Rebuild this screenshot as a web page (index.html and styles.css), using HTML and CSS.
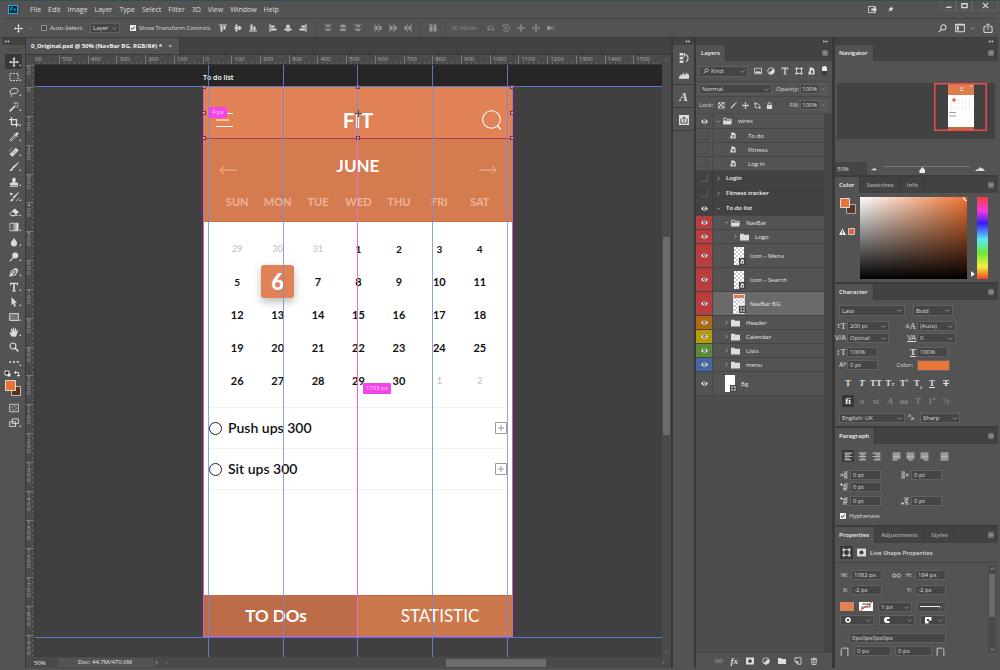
FILE: index.html
```html
<!DOCTYPE html>
<html lang="en">
<head>
<meta charset="utf-8">
<title>0_Original.psd</title>
<link rel="stylesheet" href="styles.css">
</head>
<body>
<svg class="defs" aria-hidden="true">
  <symbol id="move" viewBox="0 0 16 16"><path d="M8 0l2.6 3.4H9v3.600h3.600V5.400L16 8l-3.400 2.600V9H9v3.600h1.600L8 16l-2.600-3.400H7V9H3.400v1.600L0 8l3.400-2.600V7H7V3.400H5.400z" fill="currentColor"/></symbol>
  <symbol id="move3" viewBox="0 0 16 16"><path d="M8 0l3 4H5zM8 16l3-4H5zM0 8l4-3v6zM16 8l-4-3v6zM8 5l3 3-3 3-3-3z" fill="currentColor"/></symbol>
  <symbol id="chev" viewBox="0 0 16 16"><path d="M3 5.500l5 5 5-5" fill="none" stroke="currentColor" stroke-width="1.800"/></symbol>
  <symbol id="chevr" viewBox="0 0 16 16"><path d="M5.500 2l5 6-5 6" fill="none" stroke="currentColor" stroke-width="1.800"/></symbol>
  <symbol id="dbl" viewBox="0 0 16 8"><path d="M7 0v8L1 4zM15 0v8L9 4z" fill="currentColor"/></symbol>
  <symbol id="burger" viewBox="0 0 16 14"><path d="M1 1.500h14M1 5.200h14M1 8.800h14M1 12.500h14" stroke="currentColor" stroke-width="2"/></symbol>
  <symbol id="al-top" viewBox="0 0 16 16"><path d="M0 1h16v2H0zM3 4h4v11H3zM9 4h4v7H9z" fill="currentColor"/></symbol>
  <symbol id="al-mid" viewBox="0 0 16 16"><path d="M0 7h16v2H0zM3 1h4v14H3zM9 4h4v8H9z" fill="currentColor"/></symbol>
  <symbol id="al-bot" viewBox="0 0 16 16"><path d="M0 13h16v2H0zM3 1h4v11H3zM9 5h4v7H9z" fill="currentColor"/></symbol>
  <symbol id="al-left" viewBox="0 0 16 16"><path d="M1 0h2v16H1zM4 3h7v4H4zM4 9h11v4H4z" fill="currentColor"/></symbol>
  <symbol id="al-cen" viewBox="0 0 16 16"><path d="M7 0h2v16H7zM4 3h8v4H4zM1 9h14v4H1z" fill="currentColor"/></symbol>
  <symbol id="al-right" viewBox="0 0 16 16"><path d="M13 0h2v16h-2zM5 3h7v4H5zM1 9h11v4H1z" fill="currentColor"/></symbol>
  <symbol id="di-v" viewBox="0 0 16 16"><path d="M0 1h16v1.500H0zM4 3h8v3H4zM0 9h16v1.500H0zM4 11h8v3H4z" fill="currentColor"/></symbol>
  <symbol id="di-m" viewBox="0 0 16 16"><path d="M0 3.500h16V5H0zM4 1h8v6H4zM0 11h16v1.500H0zM3 9h10v5H3z" fill="currentColor"/></symbol>
  <symbol id="di-h" viewBox="0 0 16 16"><path d="M1 0h1.500v16H1zM3 4h4v8H3zM9 0h1.500v16H9zM11 4h4v8h-4z" fill="currentColor"/></symbol>
  <symbol id="autoal" viewBox="0 0 16 16"><path d="M1 1h6v3H1zM9 1h6v3H9zM1 5h6v10H1zM9 5h6v10H9z" fill="currentColor"/></symbol>
  <symbol id="orbit" viewBox="0 0 16 16"><path d="M2 11C0 7 5 2 9 4s6 7 3 8-9-2-8-5M1 12l5-1M12 9l2 4" fill="none" stroke="currentColor" stroke-width="1.600"/></symbol>
  <symbol id="roll" viewBox="0 0 16 16"><path d="M2.500 4A7 7 0 1 1 2 11M2 1v4h4" fill="none" stroke="currentColor" stroke-width="1.500"/><circle cx="8" cy="8" r="2.300" fill="none" stroke="currentColor" stroke-width="1.400"/></symbol>
  <symbol id="cam" viewBox="0 0 16 16"><path d="M0 4.500h7v7H0zM7 8l3.500-3v6z" fill="currentColor"/><path d="M15 3l-3 5 3 5" fill="none" stroke="currentColor" stroke-width="1.300"/></symbol>
  <symbol id="search" viewBox="0 0 16 16"><circle cx="9.500" cy="6" r="4.500" fill="none" stroke="currentColor" stroke-width="1.800"/><path d="M6.500 9.500L1.500 14.500" stroke="currentColor" stroke-width="2.200"/></symbol>
  <symbol id="wksp" viewBox="0 0 16 16"><path d="M1 2h14v12H1z" fill="none" stroke="currentColor" stroke-width="1.600"/><path d="M3 5h3v7H3zM1 2h14v2H1z" fill="currentColor"/></symbol>
  <symbol id="share" viewBox="0 0 16 16"><path d="M5 6H1.500v9h13V6H11M8 11V1.500M4.500 4.500L8 1l3.500 3.500" fill="none" stroke="currentColor" stroke-width="1.600"/></symbol>
  <symbol id="marq" viewBox="0 0 16 16"><path d="M1.500 2.500h13v11h-13z" fill="none" stroke="currentColor" stroke-width="1.600" stroke-dasharray="3 1.800"/></symbol>
  <symbol id="lasso" viewBox="0 0 16 16"><path d="M4 11C-1 9 2 2 9 2s7 7 1 8.500c-3 .5-6-.5-7 1s2 2 1 4" fill="none" stroke="currentColor" stroke-width="1.600"/></symbol>
  <symbol id="wand" viewBox="0 0 16 16"><path d="M1 15L10 6" stroke="currentColor" stroke-width="2.600"/><path d="M11 0v4M13.500 5.500h3M7 1l2 2M14.500 1L13 3M12 7l2 2.500" stroke="currentColor" stroke-width="1.400"/></symbol>
  <symbol id="crop" viewBox="0 0 16 16"><path d="M4 0v12h12M0 4h12v12" fill="none" stroke="currentColor" stroke-width="2"/></symbol>
  <symbol id="drop" viewBox="0 0 16 16"><path d="M2 14l1-3 6-6 2 2-6 6z" fill="none" stroke="currentColor" stroke-width="1.500"/><path d="M8 3l5 5 1-1-1.500-1.500L15 3a2 2 0 0 0-2.500-2.500L10 3 9 2z" fill="currentColor"/></symbol>
  <symbol id="heal" viewBox="0 0 16 16"><path d="M1 11l10-10 4.500 4.500-10 10z" fill="currentColor"/><path d="M6 6l4.500 4.500M8 4l4 4M4 8l4 4" stroke="#555" stroke-width=".8"/><path d="M1 7c0-3 2-5 5-5" stroke="currentColor" fill="none" stroke-dasharray="2 1"/></symbol>
  <symbol id="brush" viewBox="0 0 16 16"><path d="M15 1L7 10 5.500 8.500z" stroke="currentColor" stroke-width="1.500" fill="currentColor"/><path d="M5 9.500c2 1 2 2.500 0 4-1.500 1-3.500 1-4.500.5 2-1 2-4 4.500-4.500z" fill="currentColor"/></symbol>
  <symbol id="stamp" viewBox="0 0 16 16"><path d="M6.500 8.500C4 4 5 1 8 1s4 3 1.500 7.500l5 1V13h-13V9.500zM1.500 14h13v1.500h-13z" fill="currentColor"/></symbol>
  <symbol id="hist" viewBox="0 0 16 16"><path d="M15 1L8 10 6.500 8.500z" stroke="currentColor" stroke-width="1.400" fill="currentColor"/><path d="M6 10c2 1 1 3-.5 4.500-1 .5-3 .5-4 0 2-1 2-4 4.500-4.500zM1 1l6 1-4 4z" fill="currentColor"/><path d="M11 14c3-1 4-3 4-5" fill="none" stroke="currentColor"/></symbol>
  <symbol id="erase" viewBox="0 0 16 16"><path d="M1 11l8-8 6 5-6 6H4z" fill="none" stroke="currentColor" stroke-width="1.500"/><path d="M5 7l4-4 6 5-4 4zM3 13h12v1.500H3z" fill="currentColor"/></symbol>
  <symbol id="grad" viewBox="0 0 16 16"><linearGradient id="gr"><stop offset="0" stop-color="#333"/><stop offset="1" stop-color="#eee"/></linearGradient><path d="M1.500 2h13v12h-13z" fill="url(#gr)" stroke="currentColor" stroke-width="1.300"/></symbol>
  <symbol id="blur" viewBox="0 0 16 16"><path d="M8 1c2 4 5 6 5 9a5 5 0 0 1-10 0c0-3 3-5 5-9z" fill="currentColor"/></symbol>
  <symbol id="dodge" viewBox="0 0 16 16"><circle cx="10" cy="5.500" r="4.800" fill="currentColor"/><path d="M7 9l-6 6" stroke="currentColor" stroke-width="2"/></symbol>
  <symbol id="pen" viewBox="0 0 16 16"><path d="M1.500 14.500L4 6.500 9.500 3l4 4L10 12.500zM1.500 14.500L8 8M10.500 2l4 4" fill="none" stroke="currentColor" stroke-width="1.700"/><circle cx="8.500" cy="7.500" r="1.500" fill="currentColor"/></symbol>
  <symbol id="type" viewBox="0 0 16 16"><path d="M1.500 1h13v4.500h-1.300C13 3.500 12.500 3 10.500 3H9.300v9.500c0 1 .5 1.200 2 1.300V15H4.700v-1.200c1.500-.1 2-.3 2-1.300V3H5.500C3.500 3 3 3.500 2.800 5.500H1.500z" fill="currentColor"/></symbol>
  <symbol id="arrow" viewBox="0 0 16 16"><path d="M4 0l9 9.500H9l2 5-2.500 1-2-5L4 13z" fill="currentColor"/></symbol>
  <symbol id="rect" viewBox="0 0 16 16"><path d="M1 2.500h14v11H1z" fill="#777" stroke="currentColor" stroke-width="1.500"/></symbol>
  <symbol id="hand" viewBox="0 0 16 16"><path d="M4 15L.5 9l1.500-1L4 10 3 3l1.500-.5L6 7V1h1.700l.6 6L10 1.500l1.500.5-.7 6L13 4.500l1.500.5L12.500 12 11 15.500z" fill="currentColor"/></symbol>
  <symbol id="zoom" viewBox="0 0 16 16"><circle cx="6.300" cy="6.300" r="4.800" fill="none" stroke="currentColor" stroke-width="1.800"/><path d="M10 10l5 5" stroke="currentColor" stroke-width="2.500"/></symbol>
  <symbol id="dots" viewBox="0 0 16 16"><circle cx="2" cy="8" r="1.700" fill="currentColor"/><circle cx="8" cy="8" r="1.700" fill="currentColor"/><circle cx="14" cy="8" r="1.700" fill="currentColor"/></symbol>
  <symbol id="qmask" viewBox="0 0 16 16"><path d="M1 2h14v12H1z" fill="none" stroke="currentColor" stroke-width="1.300"/><circle cx="8" cy="8" r="3.500" fill="none" stroke="currentColor" stroke-width="1.300" stroke-dasharray="1.500 1"/></symbol>
  <symbol id="screen" viewBox="0 0 16 16"><path d="M5 1.500h10v7.500H5zM1 6h9.500v7.500H1z" fill="#535353" stroke="currentColor" stroke-width="1.500"/></symbol>
  <symbol id="eye" viewBox="0 0 16 12"><path d="M0 6c4-6.500 12-6.500 16 0-4 6.500-12 6.500-16 0z" fill="#f4f4f4"/><circle cx="8" cy="6" r="3.500" fill="#444"/><circle cx="8" cy="6" r="1.300" fill="#f4f4f4"/></symbol>
  <symbol id="folder" viewBox="0 0 16 14"><path d="M0 1h6l1.500 2H16v10H0z" fill="currentColor"/></symbol>
  <symbol id="folderopen" viewBox="0 0 16 14"><path d="M1 12V2h5l1 2h7.500v2" fill="none" stroke="currentColor" stroke-width="1.500"/><path d="M2 6h14l-1.500 7H0z" fill="currentColor"/></symbol>
  <symbol id="smart" viewBox="0 0 16 16"><path d="M3 1h6l4 4v10H7v-3h3V7H6v3H3z" fill="currentColor"/><path d="M1 9h5v6H1z" fill="currentColor"/></symbol>
  <symbol id="picture" viewBox="0 0 16 16"><path d="M1 2.500h14v11H1z" fill="none" stroke="currentColor" stroke-width="1.600"/><path d="M3 11l3-4 3 3 2-2 3 3v1H3z" fill="currentColor"/></symbol>
  <symbol id="adj" viewBox="0 0 16 16"><circle cx="8" cy="8" r="6.500" fill="none" stroke="currentColor" stroke-width="1.600"/><path d="M12.600 3.400A6.500 6.500 0 1 1 3.400 12.600z" fill="currentColor"/></symbol>
  <symbol id="shape" viewBox="0 0 16 16"><path d="M3 3h10v10H3z" fill="none" stroke="currentColor" stroke-width="1.600"/><path d="M1 1h4v4H1zM11 1h4v4h-4zM1 11h4v4H1zM11 11h4v4h-4z" fill="currentColor"/></symbol>
  <symbol id="lock" viewBox="0 0 16 16"><path d="M2 7h12v9H2z" fill="currentColor"/><path d="M4.500 7V4.500a3.500 3.500 0 0 1 7 0V7" fill="none" stroke="currentColor" stroke-width="2"/></symbol>
  <symbol id="check" viewBox="0 0 16 16"><path d="M1 1h14v14H1z" fill="none" stroke="currentColor"/><path d="M1 1h4v4H1zM9 1h4v4H9zM5 5h4v4H5zM1 9h4v4H1zM9 9h4v4H9z" fill="currentColor"/></symbol>
  <symbol id="artb" viewBox="0 0 16 16"><path d="M3 0v13h13M0 4h9l4 4v8" fill="none" stroke="currentColor" stroke-width="1.700"/></symbol>
  <symbol id="history" viewBox="0 0 16 16"><path d="M1 0h6v4H1zM1 6h6v4H1zM1 12h6v4H1z" fill="currentColor"/><path d="M9 3c5-1 6 4 5 8l-3 3M9 0v6" fill="none" stroke="currentColor" stroke-width="1.700"/></symbol>
  <symbol id="histo" viewBox="0 0 16 16"><path d="M0 14V9l1 2 1-5 1 4 1-3 1 2 1-5 1 3 1-4 1 6 1-3 1 2 1-5 1 4 1-2 1 3 1-2v8z" fill="currentColor"/></symbol>
  <symbol id="upbox" viewBox="0 0 16 16"><path d="M0 0h16v16H0z" fill="currentColor"/><path d="M3 6v7h10V6M8 11V4M5 6l3-3 3 3" fill="none" stroke="#444" stroke-width="1.500"/></symbol>
  <symbol id="link" viewBox="0 0 16 8"><path d="M7 4a3 3 0 1 1-6 0 3 3 0 0 1 6 0zM15 4a3 3 0 1 1-6 0 3 3 0 0 1 6 0z" fill="none" stroke="currentColor" stroke-width="1.500"/></symbol>
  <symbol id="mask" viewBox="0 0 16 16"><path d="M0 1h16v14H0z" fill="currentColor"/><circle cx="8" cy="8" r="3.700" fill="#444"/></symbol>
  <symbol id="newl" viewBox="0 0 16 16"><path d="M2 1.500h12v13H8L2 9z" fill="none" stroke="currentColor" stroke-width="1.700"/><path d="M2 8.500h6.500V15z" fill="currentColor"/></symbol>
  <symbol id="trash" viewBox="0 0 16 16"><path d="M3 5h10l-1 10H4zM2 3.500h12M6 2h4M6.500 7v6M9.500 7v6" fill="none" stroke="currentColor" stroke-width="1.500"/></symbol>
  <symbol id="mount" viewBox="0 0 20 10"><path d="M0 9l4-4 2 1 4-5 3 3 2-1 5 6z" fill="currentColor"/></symbol>
  <symbol id="pl" viewBox="0 0 16 16"><path d="M1 2h14M1 5h9M1 8h14M1 11h9M1 14h12" stroke="currentColor" stroke-width="2"/></symbol>
  <symbol id="pc" viewBox="0 0 16 16"><path d="M1 2h14M4 5h8M1 8h14M4 11h8M2 14h12" stroke="currentColor" stroke-width="2"/></symbol>
  <symbol id="pr" viewBox="0 0 16 16"><path d="M1 2h14M6 5h9M1 8h14M6 11h9M3 14h12" stroke="currentColor" stroke-width="2"/></symbol>
  <symbol id="pj1" viewBox="0 0 16 16"><path d="M1 2h14M1 5h14M1 8h14M1 11h14M1 14h9" stroke="currentColor" stroke-width="2.400"/></symbol>
  <symbol id="pj2" viewBox="0 0 16 16"><path d="M1 2h14M1 5h14M1 8h14M1 11h14M4 14h8" stroke="currentColor" stroke-width="2.400"/></symbol>
  <symbol id="pj3" viewBox="0 0 16 16"><path d="M1 2h14M1 5h14M1 8h14M1 11h14M6 14h9" stroke="currentColor" stroke-width="2.400"/></symbol>
  <symbol id="pj4" viewBox="0 0 16 16"><path d="M1 2h14M1 5h14M1 8h14M1 11h14M1 14h14" stroke="currentColor" stroke-width="2.400"/></symbol>
  <symbol id="indl" viewBox="0 0 16 16"><path d="M0 8h6M4 5l3 3-3 3" stroke="currentColor" fill="none" stroke-width="1.600"/><path d="M8 2h8M8 5h6M8 8h8M8 11h6M8 14h8" stroke="currentColor" stroke-width="1.500"/></symbol>
  <symbol id="indr" viewBox="0 0 16 16"><path d="M16 8h-6M13 5l-3 3 3 3" stroke="currentColor" fill="none" stroke-width="1.600"/><path d="M0 2h8M2 5h6M0 8h8M2 11h6M0 14h8" stroke="currentColor" stroke-width="1.500"/></symbol>
  <symbol id="indt" viewBox="0 0 16 16"><path d="M0 3h6M3 0v6" stroke="currentColor" stroke-width="1.600"/><path d="M8 2h8M6 5h8M6 8h10M6 11h8M6 14h8" stroke="currentColor" stroke-width="1.500"/></symbol>
  <symbol id="indb" viewBox="0 0 16 16"><path d="M0 13h6M3 10v6" stroke="currentColor" stroke-width="1.600"/><path d="M6 2h10M8 5h6M6 8h8M8 11h6M8 14h8" stroke="currentColor" stroke-width="1.500"/></symbol>
  <symbol id="cornl" viewBox="0 0 16 16"><path d="M2 16V6c0-3 1.500-4 4-4h8v14" fill="none" stroke="currentColor" stroke-width="1.500"/></symbol>
</svg>

<div class="app">
  <header class="menubar">
    <svg class="pslogo" viewBox="0 0 22 20"><rect x="1" y="1" width="20" height="18" fill="#0a2433" stroke="#26b9ee" stroke-width="2"/><path d="M6 15V5h3a2.500 2.500 0 0 1 0 5H6M17 8.500c-3-1-4 .5-3 1.500l2 1.500c1 1.500-1 3-3.500 2" fill="none" stroke="#26b9ee" stroke-width="1.600"/></svg>
    <nav class="menus"><button>File</button><button>Edit</button><button>Image</button><button>Layer</button><button>Type</button><button>Select</button><button>Filter</button><button>3D</button><button>View</button><button>Window</button><button>Help</button></nav>
    <div class="winleft">
      <svg viewBox="0 0 16 14" class="i9"><path d="M1 1.500h12v11H1z" fill="none" stroke="#ddd" stroke-width="1.500"/><path d="M6 5h5V2l5 5-5 5V9H6z" fill="#ddd"/></svg>
      <svg viewBox="0 0 16 16" class="i7"><path d="M9 1l6 6-3 1-2 4-3-2-6 5 5-6-2-3 4-2z" fill="#ddd"/></svg>
    </div>
    <div class="winbtns">
      <button aria-label="Minimize"><svg viewBox="0 0 16 16" class="i7"><path d="M2 12h13" stroke="#ddd" stroke-width="3"/></svg></button>
      <button aria-label="Restore"><svg viewBox="0 0 16 16" class="i7"><path d="M2 4h12v9H2z" fill="none" stroke="#ddd" stroke-width="3"/></svg></button>
      <button aria-label="Close"><svg viewBox="0 0 16 16" class="i7"><path d="M2 2l12 12M14 2L2 14" stroke="#ddd" stroke-width="2.500"/></svg></button>
    </div>
  </header>

  <div class="options">
    <svg class="i9"><use href="#move"/></svg><svg class="i5 dim gap1"><use href="#chev"/></svg>
    <label class="ck autosel"><input type="checkbox">Auto-Select:</label>
    <select class="w30" aria-label="Auto-select target"><option>Layer</option></select>
    <label class="ck showtr"><input type="checkbox" checked>Show Transform Controls</label>
    <div class="grp g1"><svg><use href="#al-top"/></svg><svg><use href="#al-mid"/></svg><svg><use href="#al-bot"/></svg></div>
    <div class="grp"><svg><use href="#al-left"/></svg><svg><use href="#al-cen"/></svg><svg><use href="#al-right"/></svg></div>
    <div class="grp dis sepl"><svg><use href="#di-v"/></svg><svg><use href="#di-m"/></svg><svg><use href="#di-v"/></svg></div>
    <div class="grp dis"><svg><use href="#di-h"/></svg><svg><use href="#di-h"/></svg><svg class="flip"><use href="#di-h"/></svg></div>
    <div class="grp dis sepl sepr"><svg><use href="#autoal"/></svg></div>
    <span class="mode">3D Mode:</span>
    <div class="grp dis g3d"><svg><use href="#orbit"/></svg><svg><use href="#roll"/></svg><svg><use href="#move"/></svg><svg><use href="#move3"/></svg><svg><use href="#cam"/></svg></div>
    <div class="optright"><svg class="i9"><use href="#search"/></svg><svg class="i10"><use href="#wksp"/></svg><svg class="i5"><use href="#chev"/></svg><svg class="i10"><use href="#share"/></svg></div>
  </div>

  <div class="work">
    <aside class="tools">
      <div class="toolhead"><svg class="dbl flip"><use href="#dbl"/></svg></div>
      <div class="grip"></div>
      <button class="on" aria-label="Move"><svg><use href="#move"/></svg></button>
      <button aria-label="Marquee"><svg><use href="#marq"/></svg></button>
      <button aria-label="Lasso"><svg><use href="#lasso"/></svg></button>
      <button aria-label="Magic wand"><svg><use href="#wand"/></svg></button>
      <button aria-label="Crop"><svg><use href="#crop"/></svg></button>
      <button aria-label="Eyedropper"><svg><use href="#drop"/></svg></button>
      <button aria-label="Healing brush"><svg><use href="#heal"/></svg></button>
      <button aria-label="Brush"><svg><use href="#brush"/></svg></button>
      <button aria-label="Stamp"><svg><use href="#stamp"/></svg></button>
      <button aria-label="History brush"><svg><use href="#hist"/></svg></button>
      <button aria-label="Eraser"><svg><use href="#erase"/></svg></button>
      <button aria-label="Gradient"><svg><use href="#grad"/></svg></button>
      <button aria-label="Blur"><svg><use href="#blur"/></svg></button>
      <button aria-label="Dodge"><svg><use href="#dodge"/></svg></button>
      <button aria-label="Pen"><svg><use href="#pen"/></svg></button>
      <button aria-label="Type"><svg><use href="#type"/></svg></button>
      <button aria-label="Path selection"><svg><use href="#arrow"/></svg></button>
      <button aria-label="Rectangle"><svg><use href="#rect"/></svg></button>
      <button aria-label="Hand"><svg><use href="#hand"/></svg></button>
      <button aria-label="Zoom" class="nt"><svg><use href="#zoom"/></svg></button>
      <button aria-label="More"><svg><use href="#dots"/></svg></button>
      <svg class="swatches" viewBox="0 0 18 28"><path d="M1 1h4v4H1z" fill="#111" stroke="#eee"/><path d="M3.500 3.500h3v3h-3z" fill="#eee"/><path d="M11 2.500h3.500V6M12 1l-1.500 1.500L12 4M13 5l1.500 1.500L16 5" fill="none" stroke="#ddd"/><path d="M7.500 16.500h9v9h-9z" fill="#5b3012" stroke="#bbb"/><path d="M1.500 10.500h10v10h-10z" fill="#ea7233" stroke="#ddd"/></svg>
      <button aria-label="Quick mask" class="nt"><svg><use href="#qmask"/></svg></button>
      <button aria-label="Screen mode"><svg><use href="#screen"/></svg></button>
    </aside>

    <main class="doc">
      <div class="tabs doctabs"><button class="tab on">0_Original.psd @ 50% (NavBar BG, RGB/8#) * <span class="x">×</span></button></div>
      <div class="stage">
        <div class="corner"></div>
        <div class="hruler"><span>00</span><span>500</span><span>400</span><span>300</span><span>200</span><span>100</span><span>0</span><span>100</span><span>200</span><span>300</span><span>400</span><span>500</span><span>600</span><span>700</span><span>800</span><span>900</span><span>1000</span><span>1100</span><span>1200</span><span>1300</span><span>1400</span><span>1500</span></div>
        <div class="vscroll top"><svg class="i5"><use href="#chev"/></svg></div>
        <div class="vruler"><span>00</span><span>0</span><span>100</span><span>200</span><span>300</span><span>400</span><span>500</span><span>600</span><span>700</span><span>800</span><span>900</span><span>1000</span><span>1100</span><span>1200</span><span>1300</span><span>1400</span><span>1500</span><span>1600</span><span>1700</span><span>1800</span><span>1900</span></div>
        <div class="canvas">
          <div class="above"><span>To do list</span></div>
          <div class="artboard">
            <div class="navbar">
              <svg class="ham" viewBox="0 0 18 16"><path d="M0 1.500h17M0 8h13M0 14.500h17" stroke="#fff" stroke-width="1"/></svg>
              <h1>FIT</h1>
              <svg class="mag" viewBox="0 0 20 20"><circle cx="9.500" cy="9.500" r="8.800" fill="none" stroke="#fff" stroke-width="1.100"/><path d="M15.500 16l3.500 3.500" stroke="#fff" stroke-width="1.200"/></svg>
              <i class="h tl"></i><i class="h tc"></i><i class="h tr"></i><i class="h ml"></i><i class="h mr"></i><i class="h bl"></i><i class="h bc"></i><i class="h br"></i>
              <svg class="ctr" viewBox="0 0 7 7"><path d="M3.500 0v7M0 3.500h7" stroke="#444"/></svg>
              <span class="tip tip4">4 px</span>
            </div>
            <div class="month">
              <div class="mrow">
                <svg viewBox="0 0 18 10"><path d="M18 5H1M5 1L1 5l4 4" fill="none" stroke="#f0b797" stroke-width="1"/></svg>
                <h2>JUNE</h2>
                <svg viewBox="0 0 18 10"><path d="M0 5h17M13 1l4 4-4 4" fill="none" stroke="#f0b797" stroke-width="1"/></svg>
              </div>
              <div class="week"><span>SUN</span><span>MON</span><span>TUE</span><span>WED</span><span>THU</span><span>FRI</span><span>SAT</span></div>
            </div>
            <div class="days">
              <span class="o">29</span><span class="o">30</span><span class="o">31</span><span class="s">1</span><span class="s">2</span><span class="s">3</span><span class="s">4</span>
              <span class="s">5</span><span><b>6</b></span><span>7</span><span>8</span><span>9</span><span>10</span><span>11</span>
              <span>12</span><span>13</span><span>14</span><span>15</span><span>16</span><span>17</span><span>18</span>
              <span>19</span><span>20</span><span>21</span><span>22</span><span>23</span><span>24</span><span>25</span>
              <span>26</span><span>27</span><span>28</span><span>29</span><span>30</span><span class="o">1</span><span class="o">2</span>
              <span class="tip tip1733">1733 px</span>
            </div>
            <div class="todo"><i class="ring"></i><span>Push ups 300</span><svg viewBox="0 0 12 12"><path d="M.500.500h11v11H.500zM6 3v6M3 6h6" fill="none" stroke="#999"/></svg></div>
            <div class="todo"><i class="ring"></i><span>Sit ups 300</span><svg viewBox="0 0 12 12"><path d="M.500.500h11v11H.500zM6 3v6M3 6h6" fill="none" stroke="#999"/></svg></div>
            <div class="rest"></div>
            <div class="foot"><button class="on">TO DOs</button><button>STATISTIC</button></div>
          </div>
          <i class="gv g-a"></i><i class="gv g-b"></i><i class="gv g-c"></i><i class="gv g-d"></i><i class="gv g-e"></i>
          <i class="gh g-top"></i><i class="gh g-bot"></i><i class="snap"></i>
        </div>
        <div class="vscroll"><i class="vthumb"></i><svg class="i5"><use href="#chev"/></svg></div>
        <div class="status"><span class="pct">50%</span><span class="dinfo">Doc: 44.7M/470.6M</span><svg class="i5 bright"><use href="#chevr"/></svg><svg class="i5 flip2"><use href="#chevr"/></svg><i class="hthumb"></i><svg class="i5 endarr"><use href="#chevr"/></svg></div>
      </div>
    </main>

    <aside class="strip">
      <div class="colhead"><svg class="dbl"><use href="#dbl"/></svg></div>
      <div class="sbox"><svg><use href="#history"/></svg><svg><use href="#histo"/></svg></div>
      <div class="sbox one"><span class="scriptA">A</span></div>
      <div class="sbox one"><svg><use href="#upbox"/></svg></div>
    </aside>

    <aside class="layers">
      <div class="colhead"><svg class="dbl flip"><use href="#dbl"/></svg></div>
      <div class="tabs"><button class="tab on">Layers</button><svg class="menu"><use href="#burger"/></svg></div>
      <div class="frow filter"><div class="kind"><svg class="i6"><use href="#search"/></svg><select aria-label="Filter kind"><option>Kind</option></select></div>
        <svg><use href="#picture"/></svg><svg><use href="#adj"/></svg><svg><use href="#type"/></svg><svg><use href="#shape"/></svg><svg><use href="#smart"/></svg><i class="toggle"></i></div>
      <div class="frow blend"><select class="grow" aria-label="Blend mode"><option>Normal</option></select><label for="op">Opacity:</label><input id="op" value="100%"><svg class="i6 arr"><use href="#chev"/></svg></div>
      <div class="frow locks"><span class="lk">Lock:</span><svg><use href="#check"/></svg><svg><use href="#brush"/></svg><svg><use href="#move"/></svg><svg><use href="#artb"/></svg><svg><use href="#lock"/></svg><label for="fi">Fill:</label><input id="fi" value="100%"><svg class="i6 arr"><use href="#chev"/></svg></div>
      <div class="listwrap">
        <ul class="list">
          <li class="r15"><i class="e"><svg><use href="#eye"/></svg></i><svg class="i5"><use href="#chev"/></svg><svg class="fo"><use href="#folderopen"/></svg><span class="t">wires</span></li>
          <li class="r14"><i class="e no"></i><svg class="so"><use href="#smart"/></svg><span class="t2">To do</span></li>
          <li class="r14"><i class="e no"></i><svg class="so"><use href="#smart"/></svg><span class="t2">Fitness</span></li>
          <li class="r14"><i class="e no"></i><svg class="so"><use href="#smart"/></svg><span class="t2">Log In</span></li>
          <li class="r15 ab"><i class="e no"></i><svg class="i5"><use href="#chevr"/></svg><span>Login</span></li>
          <li class="r15 ab"><i class="e no"></i><svg class="i5"><use href="#chevr"/></svg><span>Fitness tracker</span></li>
          <li class="r15 ab"><i class="e"><svg><use href="#eye"/></svg></i><svg class="i5"><use href="#chev"/></svg><span>To do list</span></li>
          <li class="r14 in1"><i class="e red"><svg><use href="#eye"/></svg></i><svg class="i5"><use href="#chev"/></svg><svg class="fo"><use href="#folderopen"/></svg><span class="t">NavBar</span></li>
          <li class="r14 in2"><i class="e red"><svg><use href="#eye"/></svg></i><svg class="i5"><use href="#chevr"/></svg><svg class="fo"><use href="#folder"/></svg><span class="t">Logo</span></li>
          <li class="r24"><i class="e red"><svg><use href="#eye"/></svg></i><i class="th ckr"><svg><use href="#smart"/></svg></i><span>Icon – Menu</span></li>
          <li class="r24"><i class="e red"><svg><use href="#eye"/></svg></i><i class="th ckr"><svg><use href="#smart"/></svg></i><span>Icon – Search</span></li>
          <li class="r24 picked"><i class="e red"><svg><use href="#eye"/></svg></i><i class="th ckr bar"><svg><use href="#shape"/></svg></i><span>NavBar BG</span></li>
          <li class="r14 in1"><i class="e orange"><svg><use href="#eye"/></svg></i><svg class="i5"><use href="#chevr"/></svg><svg class="fo"><use href="#folder"/></svg><span class="t">Header</span></li>
          <li class="r14 in1"><i class="e yellow"><svg><use href="#eye"/></svg></i><svg class="i5"><use href="#chevr"/></svg><svg class="fo"><use href="#folder"/></svg><span class="t">Calendar</span></li>
          <li class="r14 in1"><i class="e green"><svg><use href="#eye"/></svg></i><svg class="i5"><use href="#chevr"/></svg><svg class="fo"><use href="#folder"/></svg><span class="t">Lists</span></li>
          <li class="r14 in1"><i class="e blue"><svg><use href="#eye"/></svg></i><svg class="i5"><use href="#chevr"/></svg><svg class="fo"><use href="#folder"/></svg><span class="t">menu</span></li>
          <li class="r24 bg"><i class="e"><svg><use href="#eye"/></svg></i><i class="th"><svg><use href="#shape"/></svg></i><span>Bg</span></li>
        </ul>
      </div>
      <div class="lfoot"><svg class="dim"><use href="#link"/></svg><em>fx</em><svg><use href="#mask"/></svg><svg><use href="#adj"/></svg><svg><use href="#folder"/></svg><svg><use href="#newl"/></svg><svg><use href="#trash"/></svg></div>
    </aside>

    <aside class="right">
      <div class="colhead"><svg class="dbl flip"><use href="#dbl"/></svg></div>
      <section>
        <div class="tabs"><button class="tab on">Navigator</button><svg class="menu"><use href="#burger"/></svg></div>
        <div class="navi"><div class="navarea"><svg class="view" viewBox="0 0 53 48"><rect x="14" y="1" width="26" height="46" fill="#fff"/><path d="M14 1h26v11H14z" fill="#df7d4e"/><path d="M14 44h26v3H14z" fill="#c8683e"/><rect x="18.500" y="15.500" width="3" height="3" fill="#d4633c"/><path d="M24 17h14M17 20h21M17 23h21M17 26h21" stroke="#ccc" stroke-width="1" stroke-dasharray="1 2.500"/><path d="M26 5h3M26 7.500h3M36 3h2" stroke="#ffe3d5"/><path d="M15 29.500h7M15 33h7" stroke="#888" stroke-width=".8"/><rect x=".75" y=".75" width="51.500" height="46.500" fill="none" stroke="#f0484c" stroke-width="1.500"/></svg></div></div>
        <div class="navslide"><input class="npct" aria-label="Zoom level" value="50%"><svg class="m1"><use href="#mount"/></svg><input type="range" aria-label="Zoom" value="45"><svg class="m2"><use href="#mount"/></svg></div>
      </section>
      <section>
        <div class="tabs"><button class="tab on">Color</button><button class="tab">Swatches</button><button class="tab">Info</button><svg class="menu"><use href="#burger"/></svg></div>
        <div class="color">
          <svg class="cs" viewBox="0 0 18 40"><path d="M7.500 7.500h9v9h-9z" fill="#5b3528" stroke="#aaa"/><path d="M1.500 1.500h9v9h-9z" fill="#ea7233" stroke="#ddd"/><path d="M3.500 31.500L7 38H0z" fill="#eee"/><path d="M3.500 33.500v2.500M3.500 36.500v1" stroke="#444" stroke-width=".8"/><path d="M9.500 31.500h6v6h-6z" fill="#e0613a" stroke="#ccc"/></svg>
          <div class="field"><i class="pick"></i></div>
          <svg class="ptr" viewBox="0 0 5 6"><path d="M1 0l4 3-4 3z" fill="#eee"/></svg>
          <div class="hue"></div>
        </div>
      </section>
      <section>
        <div class="tabs"><button class="tab on">Character</button><svg class="menu"><use href="#burger"/></svg></div>
        <div class="char">
          <div class="fonts"><select class="w66" aria-label="Font family"><option>Lato</option></select><select class="w40" aria-label="Font style"><option>Bold</option></select></div>
          <div class="cgrid">
            <label for="c1" class="se"><small>T</small>T</label><select id="c1"><option>200 pt</option></select><label for="c2"><small>A</small>A</label><select id="c2"><option>(Auto)</option></select>
            <label for="c3" class="sa">V/A</label><select id="c3"><option>Optical</option></select><label for="c4" class="sa box">VA</label><select id="c4"><option>0</option></select>
          </div>
          <div class="cgrid g2">
            <label for="c5" class="se">↕T</label><input id="c5" value="100%"><label for="c6" class="se un">T</label><input id="c6" class="wide" value="100%">
            <label for="c7" class="sa">A<small>ª</small></label><input id="c7" value="0 pt"><span class="cl">Color:</span><button class="csw" aria-label="Text color"></button>
          </div>
          <div class="styles"><button><b>T</b></button><button><i>T</i></button><button>TT</button><button>T<small>T</small></button><button>T<sup>1</sup></button><button>T<sub>1</sub></button><button><u>T</u></button><button><s>T</s></button></div>
          <div class="styles otf"><button class="on">fi</button><button><i>σ</i></button><button>st</button><button><i>A</i></button><button>aa</button><button><i>T</i></button><button>1<sup>st</sup></button><button>½</button></div>
          <div class="lang"><select class="w66" aria-label="Language"><option>English: UK</option></select><label for="aa"><sup>a</sup>a</label><select id="aa" class="w40"><option>Sharp</option></select></div>
        </div>
      </section>
      <section>
        <div class="tabs"><button class="tab on">Paragraph</button><svg class="menu"><use href="#burger"/></svg></div>
        <div class="para">
          <div class="palign"><button class="on" aria-label="Align left"><svg><use href="#pl"/></svg></button><button aria-label="Align center"><svg><use href="#pc"/></svg></button><button aria-label="Align right"><svg><use href="#pr"/></svg></button><button class="sp" aria-label="Justify left"><svg><use href="#pj1"/></svg></button><button aria-label="Justify center"><svg><use href="#pj2"/></svg></button><button aria-label="Justify right"><svg><use href="#pj3"/></svg></button><button class="sp" aria-label="Justify all"><svg><use href="#pj4"/></svg></button></div>
          <div class="pgrid"><svg><use href="#indl"/></svg><input aria-label="Indent left" value="0 pt"><svg><use href="#indr"/></svg><input aria-label="Indent right" value="0 pt"><svg><use href="#indt"/></svg><input aria-label="First line indent" value="0 pt"></div>
          <div class="pgrid"><svg><use href="#indt"/></svg><input aria-label="Space before" value="0 pt"><svg><use href="#indb"/></svg><input aria-label="Space after" value="0 pt"></div>
          <label class="ck"><input type="checkbox" checked>Hyphenate</label>
        </div>
      </section>
      <section class="props">
        <div class="tabs"><button class="tab on">Properties</button><button class="tab">Adjustments</button><button class="tab">Styles</button><svg class="menu"><use href="#burger"/></svg></div>
        <div class="live"><span class="lic"><svg><use href="#shape"/></svg></span><svg><use href="#mask"/></svg><b>Live Shape Properties</b></div>
        <div class="pbody">
          <div class="pform">
            <div class="wh"><label for="pw">W:</label><input id="pw" value="1082 px"><svg><use href="#link"/></svg><label for="ph">H:</label><input id="ph" value="184 px">
            <label for="px">X:</label><input id="px" value="-2 px"><span></span><label for="py">Y:</label><input id="py" value="-2 px"></div>
            <div class="fs"><button class="fill" aria-label="Fill"></button><button class="stroke" aria-label="Stroke"><svg viewBox="0 0 14 9"><path d="M3 7V5h8V2H3" fill="none" stroke="#555"/><path d="M1 9L13 0" stroke="#e33"/></svg></button><select class="w34" aria-label="Stroke width"><option>1 px</option></select><div class="sel line"><select aria-label="Stroke type"><option></option></select></div></div>
            <div class="fs3"><div class="sel"><select aria-label="Align"><option></option></select><svg viewBox="0 0 8 8"><circle cx="4" cy="4" r="2" fill="none" stroke="#fff" stroke-width="1.500"/></svg></div><div class="sel"><select aria-label="Caps"><option></option></select><svg viewBox="0 0 8 8"><path d="M6.500 1H4a3 3 0 0 0 0 6h2.500V5H4V3h2.500z" fill="#fff"/></svg></div><div class="sel"><select aria-label="Corners"><option></option></select><svg viewBox="0 0 8 8"><path d="M1 1h6.500v3.500h-3V7.500H1z" fill="#fff"/><path d="M3 3h2v2H3z" fill="#444"/></svg></div></div>
            <input class="radii" aria-label="Corner radii" value="0px0px0px0px">
            <div class="cr"><svg><use href="#cornl"/></svg><input aria-label="Top left radius" value="0 px"><input aria-label="Top right radius" value="0 px"><svg class="flip"><use href="#cornl"/></svg></div>
          </div>
          <div class="pscroll"><svg class="i5 up"><use href="#chev"/></svg><i></i><svg class="i5"><use href="#chev"/></svg></div>
        </div>
      </section>
    </aside>
  </div>
</div>
</body>
</html>
```
FILE: styles.css
```css
* { box-sizing: border-box; margin: 0; padding: 0; }
html, body { background: #383838; }
body { font: 6px/8px "Open Sans", "Noto Sans", sans-serif; color: #dedede; }
button, input, select { font: inherit; color: inherit; background: none; border: 0; border-radius: 0; outline: 0; min-width: 0; }
.defs { position: absolute; width: 0; height: 0; }
svg { display: block; flex: none; color: #dcdcdc; }
i, em { display: block; flex: none; }
.flip { transform: scaleX(-1); }
.i5 { width: 5px; height: 5px; }
.i6 { width: 6px; height: 6px; }
.i7 { width: 7px; height: 7px; }
.i9 { width: 9px; height: 9px; }
.i10 { width: 10px; height: 10px; }
.dim { color: #999; }
.dbl { width: 5px; height: 3px; }

input, select { background-color: #454545; border: 1px solid #606060; height: 10px; padding: 0 2px; }
select { appearance: none; background-image: url("data:image/svg+xml,%3Csvg xmlns='http://www.w3.org/2000/svg' viewBox='0 0 8 8'%3E%3Cpath d='M1 2.500l3 3 3-3' fill='none' stroke='%23bbb'/%3E%3C/svg%3E"); background-repeat: no-repeat; background-position: right 2px center; background-size: 5px 5px; }
.w30 { width: 30px; } .w34 { width: 34px; } .w40 { width: 40px; } .w66 { width: 66px; }
.ck { display: flex; align-items: center; gap: 3px; }
.ck input { appearance: none; flex: none; width: 6px; height: 6px; padding: 0; border: 1px solid #8a8a8a; background: #4a4a4a; }
.ck input:checked { border-color: #eee; background: #eee url("data:image/svg+xml,%3Csvg xmlns='http://www.w3.org/2000/svg' viewBox='0 0 8 8'%3E%3Cpath d='M1 4l2 2.500 4-5' fill='none' stroke='%23333' stroke-width='1.500'/%3E%3C/svg%3E") center / 5px; }

.app { min-height: 100vh; display: flex; flex-direction: column; padding: 0 2px 2px; background: #535353; border-top: 1px solid #2c5152; }
.menubar { height: 18px; display: flex; align-items: center; border-bottom: 1px solid #444; padding-left: 6px; font-size: 7px; }
.pslogo { width: 10px; height: 9px; }
.menus { display: flex; gap: 7px; margin-left: 12px; flex: 1; }
.winleft { display: flex; gap: 10px; align-items: center; margin-right: 46px; }
.winbtns { display: flex; align-self: flex-start; height: 10px; }
.winbtns button { width: 16px; display: flex; justify-content: center; align-items: center; border: 1px solid #606060; border-top: 0; }
.winbtns button:last-child { width: 26px; }

.options { height: 18px; display: flex; align-items: center; padding: 0 5px 0 12px; }
.gap1 { margin-left: 4px; }
.autosel { margin: 0 9px 0 9px; width: 40px; white-space: nowrap; }
.showtr { margin-left: 10px; width: 74px; white-space: nowrap; }
.grp { display: flex; align-items: center; gap: 7px; margin-left: 12px; }
.grp svg { width: 8px; height: 8px; }
.g1 { margin-left: 15px; }
.dis svg { color: #969696; }
.sepl { border-left: 1px solid #484848; margin-left: 8px; padding-left: 8px; height: 13px; }
.sepr { border-right: 1px solid #484848; padding-right: 8px; }
.mode { margin-left: 5px; color: #8a8a8a; }
.g3d { margin-left: 9px; }
.optright { margin-left: auto; display: flex; align-items: center; gap: 8px; }
.optright .i5 { margin-left: -3px; }

.work { flex: 1; display: flex; background: #383838; border-top: 1px solid #3a3a3a; }
.tools { width: 23px; background: #535353; display: flex; flex-direction: column; align-items: center; }
.toolhead { width: 100%; height: 7px; background: #424242; padding: 2px 3px; margin-bottom: 3px; }
.grip { width: 14px; height: 3px; border-top: 1px solid #484848; border-bottom: 1px solid #484848; margin-bottom: 3px; }
.tools button { position: relative; width: 17px; height: 15px; display: flex; align-items: center; justify-content: center; }
.tools button svg { width: 10px; height: 10px; }
.tools button.on { background: #383838; border-radius: 1px; }
.tools button::after { content: ""; position: absolute; right: 1px; bottom: 3px; border: 1px solid transparent; border-right-color: #ccc; border-bottom-color: #ccc; }
.tools button.nt::after { display: none; }
.tools .swatches { width: 18px; height: 28px; margin: 1px 1px 2px 0; }

.tabs { display: flex; height: 16px; background: #424242; align-items: stretch; }
.tab { padding: 0 5px; color: #a8a8a8; font-weight: 600; border-right: 1px solid #3b3b3b; }
.tab.on { background: #535353; color: #f2f2f2; }
.doctabs .tab { font-weight: 700; padding-right: 7px; }
.menu { width: 6px; height: 6px; margin: 5px 4px 0 auto; color: #bbb; }
.x { font-weight: 400; margin-left: 5px; }

.doc { flex: 1; min-width: 0; display: flex; flex-direction: column; margin-left: 1px; }
.stage { flex: 1; display: grid; grid-template-columns: 9px 1fr 9px; grid-template-rows: 10px 1fr 11px; border-top: 1px solid #383838; }
.corner, .hruler, .vruler, .vscroll, .status { background: #4a4a4a; }
.hruler { display: grid; grid-template-columns: 24px repeat(21, 1fr); overflow: hidden; color: #b0b0b0; line-height: 8px; border-bottom: 1px solid #383838; }
.hruler span { padding-left: 2px; border-left: 1px solid #777; background: repeating-linear-gradient(90deg, transparent 0 4px, #666 4px 5px) bottom / 100% 2px no-repeat; }
.hruler span:first-child { padding-left: 0; border: 0; }
.vruler { display: grid; grid-template-rows: 22px repeat(19, 1fr) 22px; overflow: hidden; color: #b0b0b0; border-right: 1px solid #383838; }
.vruler span { width: 8px; min-height: 0; word-break: break-all; padding: 0 3px 0 1px; line-height: 5px; border-top: 1px solid #777; background: repeating-linear-gradient(transparent 0 4px, #666 4px 5px) right / 2px 100% no-repeat; }
.vscroll { display: flex; flex-direction: column; align-items: center; justify-content: flex-end; padding-bottom: 2px; color: #999; }
.vscroll svg, .status svg { color: #999; }
.vscroll.top svg { transform: scaleY(-1); }
.vthumb { width: 7px; height: 198px; background: #6c6c6c; margin-bottom: 215px; }
.status { grid-column: 1 / -1; display: flex; align-items: center; padding: 0 5px 0 8px; color: #e8e8e8; }
.pct { width: 24px; }
.dinfo { width: 96px; padding-left: 20px; background: #535353; line-height: 9px; white-space: nowrap; }
.status .bright { color: #ddd; }
.flip2 { transform: scaleX(-1); margin-left: 5px; }
.hthumb { width: 100px; height: 8px; background: #6c6c6c; margin-left: auto; margin-right: 108px; }
.endarr { margin-left: 7px; }

.canvas { position: relative; background: #404040; overflow: hidden; padding-left: 168px; }
.above { height: 21px; margin-left: -168px; padding: 9px 0 0 168px; background: #262626; color: #fff; font-size: 7px; font-weight: 600; }
.artboard { width: 310px; height: 551px; background: #fff; font-family: Lato, sans-serif; color: #111; display: flex; flex-direction: column; border: 1px solid #d65cc6; border-top: 0; }
.navbar { position: relative; height: 53px; background: #e08256; border-top: 1px solid #d65cc6; border-bottom: 1px solid #a93a5c; display: flex; align-items: center; justify-content: space-between; padding: 14px 10px 0 12px; color: #fff; }
.navbar h1 { font-size: 21px; line-height: 24px; font-weight: 700; }
.ham { width: 18px; height: 16px; }
.mag { width: 20px; height: 20px; }
.h { position: absolute; width: 4px; height: 4px; border: 1px solid #7d2a52; background: #d9a3b0; }
.tl, .tc, .tr { top: -2px; } .ml, .mr { top: 24px; } .bl, .bc, .br { bottom: -2px; }
.tl, .ml, .bl { left: -2px; } .tc, .bc { left: 152px; } .tr, .mr, .br { right: -2px; }
.ctr { position: absolute; left: 151px; top: 23px; width: 7px; height: 7px; }
.tip { position: absolute; background: #f545ea; color: #ffd5fb; font: 6px/11px "Open Sans", sans-serif; text-align: center; border-radius: 1px; }
.tip4 { left: 5px; top: 20px; width: 18px; }
.month { height: 83px; background: #d47b50; color: #fff; display: flex; flex-direction: column; border-bottom: 1px solid #cf6b3a; }
.mrow { display: flex; align-items: center; justify-content: space-between; padding: 14px 15px 0 15px; }
.mrow svg { width: 18px; height: 10px; margin-top: 8px; }
.mrow h2 { font-size: 17px; line-height: 26px; font-weight: 700; }
.week, .days { display: grid; grid-template-columns: repeat(7, 1fr); padding: 0 12px 0 13px; text-align: center; }
.week { margin-top: 15px; font-size: 11px; line-height: 15px; font-weight: 700; color: #edb497; }
.days { position: relative; grid-auto-rows: 33px; align-items: center; justify-items: center; padding-top: 10px; padding-bottom: 10px; font-size: 11px; line-height: 14px; font-weight: 700; }
.days .o { color: #ccc; font-size: 9px; }
.days .s { font-size: 10px; }
.days b { display: block; width: 33px; line-height: 33px; background: #e08256; color: #fff; font-size: 22px; border-radius: 3px; box-shadow: 0 4px 8px #0004; }
.days .tip1733 { left: 159px; top: 161px; width: 28px; font-weight: 400; }
.todo { height: 41px; border-top: 1px solid #f1f1f1; margin: 0 5px; display: flex; align-items: center; font-size: 14px; line-height: 16px; font-weight: 600; }
.todo span { flex: 1; margin-left: 6px; }
.todo svg { width: 12px; height: 12px; }
.rest { flex: 1; margin: 0 5px; border-top: 1px solid #f1f1f1; }
.ring { width: 13px; height: 13px; border: 1px solid #222; border-radius: 50%; }
.foot { display: flex; height: 41px; font-size: 17px; border-top: 1px solid #c66a35; }
.foot button { flex: 1; background: #cc774c; color: #fff; padding-left: 10px; }
.foot .on { background: #bd6c49; font-weight: 700; padding: 0 10px 0 0; }
.gv { position: absolute; top: 0; bottom: 0; width: 1px; background: #6490e4cc; }
.g-a { left: 173px; } .g-b { left: 248px; } .g-c { left: 322px; } .g-d { left: 397px; } .g-e { left: 472px; }
.gh { position: absolute; left: 0; right: 0; height: 1px; background: #5679c8; }
.g-top { top: 21px; } .g-bot { top: 572px; }
.snap { position: absolute; left: 322px; top: 74px; height: 498px; width: 1px; background: #e26fd8; }

.colhead { height: 7px; background: #424242; padding: 2px 4px; display: flex; justify-content: flex-end; }
.strip { width: 22px; margin-left: 2px; background: #535353; border-right: 1px solid #383838; }
.sbox { display: flex; flex-direction: column; align-items: center; gap: 7px; padding: 8px 0 5px; border-bottom: 1px solid #3c3c3c; height: 40px; }
.sbox.one { height: 23px; padding: 7px 0; }
.sbox svg { width: 10px; height: 10px; }
.scriptA { font: italic 700 13px/10px "Liberation Serif", serif; }

.layers { width: 136px; margin-left: 1px; background: #535353; display: flex; flex-direction: column; }
.frow { display: flex; align-items: center; height: 15px; padding: 0 5px 0 3px; border-bottom: 1px solid #484848; }
.filter { height: 21px; justify-content: space-between; }
.filter > svg { width: 8px; height: 8px; }
.kind { display: flex; align-items: center; background: #454545; border: 1px solid #606060; width: 49px; height: 11px; padding-left: 3px; }
.kind select { flex: 1; border: 0; height: 9px; }
.toggle { width: 5px; height: 10px; border-radius: 3px; background: linear-gradient(#eee 50%, #3a3a3a 50%); }
.blend .grow { width: 73px; }
.frow label { margin-left: auto; }
.frow label + input { width: 19px; margin-left: 1px; padding: 0 1px; border-width: 1px 0 1px 1px; }
.arr { border: 1px solid #606060; width: 8px; height: 10px; padding: 2px 1px; }
.frow.locks { height: 17px; }
.locks svg { width: 7px; height: 7px; margin-left: 5px; }
.locks .arr { width: 8px; height: 10px; margin: 0; }
.listwrap { flex: 1; padding-right: 8px; background: linear-gradient(#454545, #454545) right / 8px 100% no-repeat, #4d4d4d; }
.list { list-style: none; color: #e6e6e6; }
.list li { display: flex; align-items: center; border-bottom: 1px solid #454545; background: #535353; }
.r14 { height: 14px; } .r15 { height: 15px; } .r24 { height: 24px; }
.e { width: 17px; align-self: stretch; display: flex; align-items: center; justify-content: center; border-right: 1px solid #484848; margin-right: 3px; }
.e svg { width: 7px; height: 5px; }
.e.no::after { content: ""; width: 7px; height: 7px; border: 1px solid #454545; border-top: 0; border-left: 0; }
.red { background: #b93e40; } .orange { background: #b36a0e; } .yellow { background: #b79a0c; } .green { background: #5c8a38; } .blue { background: #4668a0; }
.fo { width: 9px; height: 8px; margin-left: 2px; }
.t { margin-left: 6px; }
.so { width: 7px; height: 7px; margin-left: 14px; }
.t2 { margin-left: 11px; }
.list .ab { background: #424242; font-weight: 600; color: #f4f4f4; }
.ab span { margin-left: 5px; }
.ab .e { border-color: #3c3c3c; }
.ab .e.no::after { border-color: #5c5c5c; }
.in1 .e { margin-right: 11px; } .in2 .e { margin-right: 20px; }
.list .picked { background: #6a6a6a; }
.th { position: relative; width: 10px; height: 18px; background: #fff; margin: 0 6px 0 18px; }
.ckr { background: repeating-conic-gradient(#ccc 0 25%, #fff 0 50%) 0 0 / 4px 4px; }
.bar { box-shadow: inset 0 3px #dd7b50, 0 0 0 1px #ddd; }
.bg .th { margin-left: 9px; height: 17px; }
.th svg { position: absolute; right: -2px; bottom: 0; width: 7px; height: 7px; background: #444; padding: 1px; }
.lfoot { height: 16px; border-top: 1px solid #444; display: flex; align-items: center; justify-content: flex-end; gap: 8px; padding-right: 14px; }
.lfoot svg { width: 8px; height: 8px; }
.lfoot em { font: italic 700 9px/10px "Liberation Serif", serif; }

.right { width: 163px; margin-left: 3px; background: #535353; }
.right section { border-bottom: 2px solid #3c3c3c; }
.right .tab { padding-left: 4px; }
.right .tab + .tab { padding: 0 6px; }
.navi { padding: 22px 3px 23px 2px; }
.navarea { height: 56px; background: #424242; display: flex; justify-content: flex-end; padding-right: 8px; }
.view { width: 53px; height: 48px; }
.navslide { display: flex; align-items: center; height: 13px; }
.npct { width: 32px; height: 13px; border: 0; }
.m1 { width: 6px; height: 4px; margin-left: 4px; }
.m2 { width: 10px; height: 6px; margin-right: 13px; }
.navslide input[type=range] { appearance: none; flex: 1; height: 12px; border: 0; margin: 0 5px 0 6px; background: linear-gradient(#777, #777) 0 3px / 100% 1px no-repeat; padding: 0; }
.navslide input[type=range]::-webkit-slider-thumb { appearance: none; width: 6px; height: 6px; margin-top: 3px; background: #eee; clip-path: polygon(50% 0, 100% 60%, 100% 100%, 0 100%, 0 60%); }
.color { display: flex; padding: 4px 10px 3px 4px; height: 89px; }
.cs { width: 18px; height: 40px; }
.field { flex: 1; margin-left: 3px; display: flex; justify-content: flex-end; overflow: hidden; background: linear-gradient(transparent, #000), linear-gradient(90deg, #fff, #ee7433); }
.pick { width: 4px; height: 4px; border-left: 1px solid #fff; border-bottom: 1px solid #fff; border-bottom-left-radius: 4px; }
.ptr { width: 5px; height: 6px; align-self: flex-end; margin: 0 2px 2px 3px; }
.hue { width: 11px; background: linear-gradient(#f04038, #f23ae0 17%, #3a1cf0 32%, #5be8f5 52%, #6be83c 68%, #f5f03c 85%, #f04028); }

.char { padding: 5px 0 3px 1px; }
.fonts { display: flex; gap: 8px; padding-left: 3px; margin-bottom: 5px; }
.fonts select { height: 11px; }
.cgrid { display: grid; grid-template-columns: 10px 42px 26px 39px; column-gap: 1px; row-gap: 2px; }
.g2 { margin: 4px 0; row-gap: 3px; }
.g2 input { width: 31px; }
.cgrid label { font: 9px/10px "Liberation Serif", serif; text-align: right; white-space: nowrap; display: flex; justify-content: flex-end; }
.cgrid label.sa { font: 7px/10px "Liberation Sans", sans-serif; }
.cgrid small { font-size: 6px; }
.cgrid .un { text-decoration: underline; font-weight: 700; }
.box { text-decoration: underline; }
.cl { text-align: right; line-height: 10px; padding-right: 3px; }
.csw { width: 33px; height: 11px; background: #e8763a; border: 1px solid #666; }
.styles { display: flex; gap: 2px; margin: 6px 0 0 6px; font: 700 9px/12px "Liberation Serif", serif; }
.styles button { width: 12px; height: 12px; line-height: 12px; text-align: center; white-space: nowrap; }
.styles sup, .styles sub, .styles small { font-size: 5px; line-height: 0; }
.otf { font-weight: 400; color: #9a9a9a; }
.otf .on { background: #383838; color: #fff; font-weight: 700; }
.lang { display: flex; align-items: center; gap: 3px; margin: 6px 0 0 3px; }
.lang label { width: 9px; }
.lang sup { font-size: 5px; line-height: 0; }

.para { padding: 6px 0 5px 5px; }
.palign { display: flex; gap: 2px; margin: 0 0 8px 2px; }
.palign button { width: 12px; height: 12px; display: flex; align-items: center; justify-content: center; }
.palign .on { background: #383838; }
.palign .sp { margin-left: 6px; }
.palign svg { width: 9px; height: 9px; color: #b5b5b5; }
.pgrid { display: grid; grid-template-columns: 8px 31px 26px 31px; column-gap: 2px; row-gap: 2px; margin-bottom: 4px; align-items: center; }
.pgrid svg { width: 8px; height: 8px; justify-self: end; }
.para .ck { margin-top: 6px; }

.right .props { border-bottom: 0; }
.live { display: flex; align-items: center; gap: 4px; height: 20px; padding-left: 5px; border-bottom: 1px solid #444; }
.live svg { width: 9px; height: 9px; }
.lic { background: #383838; padding: 2px; }
.live b { font-weight: 600; }
.pbody { display: flex; justify-content: space-between; padding: 2px 2px 0 5px; }
.pform { display: flex; flex-direction: column; gap: 3px; width: 106px; padding-top: 5px; }
.wh { display: grid; grid-template-columns: 8px 31px 1fr 8px 31px; column-gap: 3px; row-gap: 5px; align-items: center; justify-items: end; margin-bottom: 4px; }
.wh input { width: 31px; }
.wh svg { width: 9px; height: 5px; }
.fs { display: flex; gap: 5px; }
.fill { width: 14px; height: 9px; background: #e08256; }
.stroke { width: 14px; height: 9px; background: #fff; }
.stroke svg { width: 14px; height: 9px; }
.sel { position: relative; flex: 1; display: flex; }
.sel select { width: 100%; }
.sel svg { position: absolute; left: 4px; top: 1px; width: 8px; height: 8px; }
.line::before { content: ""; position: absolute; left: 3px; top: 4px; width: 20px; height: 1px; background: #eee; }
.fs3 { display: grid; grid-template-columns: 34px 36px 1fr; gap: 5px; }
.radii { margin: 5px 0 0 9px; }
.cr { display: grid; grid-template-columns: 10px 37px 37px 10px; gap: 4px; align-items: center; }
.cr svg { width: 9px; height: 9px; }
.pscroll { width: 8px; height: 88px; background: #4a4a4a; display: flex; flex-direction: column; align-items: center; justify-content: space-between; padding: 1px 0; }
.pscroll i { width: 6px; height: 43px; background: #6c6c6c; margin-bottom: 28px; }
.up { transform: scaleY(-1); }
```
